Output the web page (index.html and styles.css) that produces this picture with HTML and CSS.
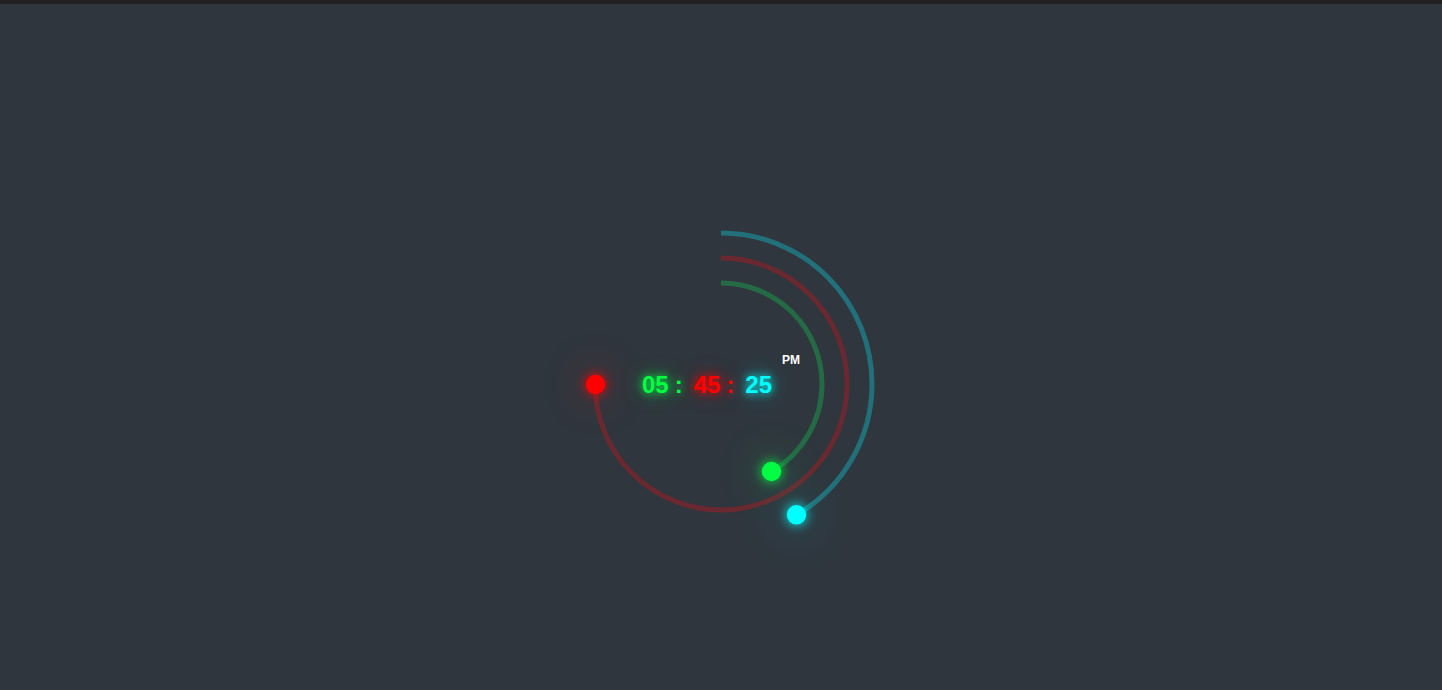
FILE: index.html
```html
<!DOCTYPE html>
<html lang="en">
<head>
<meta charset="utf-8">
<title>Clock</title>
<link rel="stylesheet" href="styles.css">
</head>
<body>
<div class="topbar"></div>
<main class="stage">
  <div class="clock">
    <svg class="rings" width="320" height="320" viewBox="0 0 320 320">
      <g transform="rotate(-90 160 160)">
        <circle class="arc arc-s" cx="160" cy="160" r="151" stroke-dasharray="395.3 2000"/>
        <circle class="arc arc-m" cx="160" cy="160" r="126" stroke-dasharray="593.8 2000"/>
        <circle class="arc arc-h" cx="160" cy="160" r="101" stroke-dasharray="264.4 2000"/>
      </g>
      <circle class="dot dot-h" cx="210.5" cy="247.5" r="9.7"/>
      <circle class="dot dot-m" cx="34.5" cy="160.5" r="9.7"/>
      <circle class="dot dot-s" cx="235.5" cy="290.8" r="9.7"/>
    </svg>
    <div class="time">
      <span class="num hr">05</span><span class="sep hr">:</span><span class="num mn">45</span><span class="sep mn">:</span><span class="num sc">25</span><span class="ampm">PM</span>
    </div>
  </div>
</main>
</body>
</html>
```
FILE: styles.css
```css
html, body {
  margin: 0;
  padding: 0;
  height: 100%;
}
body {
  background: #2f363e;
  display: flex;
  flex-direction: column;
  font-family: "Liberation Sans", Arial, sans-serif;
  overflow: hidden;
}
.topbar {
  height: 4px;
  background: #222222;
  flex: none;
}
.stage {
  flex: 1;
  display: flex;
  justify-content: center;
  align-items: flex-start;
  padding-top: 220px;
}
.clock {
  display: grid;
  width: 320px;
  height: 320px;
}
.rings, .time {
  grid-area: 1 / 1;
}
.rings {
  overflow: visible;
}
.arc {
  fill: none;
  stroke-width: 5;
  stroke-linecap: butt;
}
.arc-h { stroke: #246b45; }
.arc-m { stroke: #6a2930; }
.arc-s { stroke: #22707a; }
.dot-h {
  fill: #04fc43;
  filter: drop-shadow(0 0 6px #04fc43) drop-shadow(0 0 20px rgba(4, 252, 67, 0.35));
}
.dot-m {
  fill: #ff0000;
  filter: drop-shadow(0 0 6px #ff0000) drop-shadow(0 0 20px rgba(255, 0, 0, 0.35));
}
.dot-s {
  fill: #00ffff;
  filter: drop-shadow(0 0 6px #00ffff) drop-shadow(0 0 24px rgba(0, 255, 255, 0.35));
}
.time {
  align-self: start;
  justify-self: center;
  margin-top: 149px;
  display: flex;
  align-items: flex-start;
  font-weight: bold;
  font-size: 24px;
  line-height: 24px;
  height: 24px;
}
.sep {
  margin: 0 11px 0 6px;
}
.hr {
  color: #04fc43;
  text-shadow: 0 0 8px #04fc43, 0 0 20px rgba(4, 252, 67, 0.55);
}
.mn {
  color: #ff0000;
  text-shadow: 0 0 8px #ff0000, 0 0 20px rgba(255, 0, 0, 0.55);
}
.sc {
  color: #00ffff;
  text-shadow: 0 0 8px #00ffff, 0 0 20px rgba(0, 255, 255, 0.55);
}
.ampm {
  color: #ffffff;
  font-size: 12px;
  line-height: 12px;
  margin-left: 10px;
  margin-top: -19px;
}
```
